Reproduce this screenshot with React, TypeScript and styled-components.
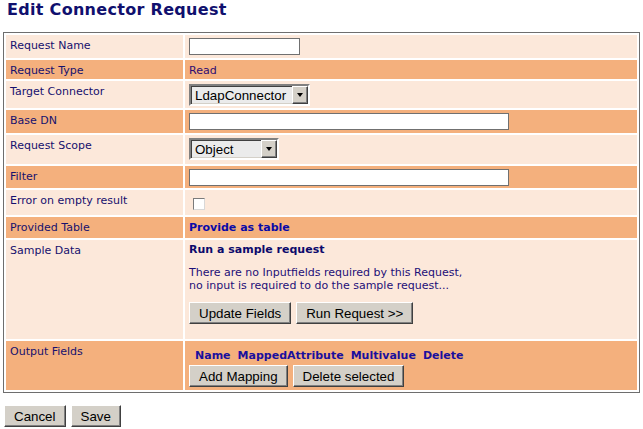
import * as React from 'react';
import styled, { createGlobalStyle } from 'styled-components';

const LIGHT = '#fce8da';
const DARK = '#f4b07d';

type Tone = 'light' | 'dark';

function Dropdown({ width, value }: { width: number; value: string }) {
    return (
        <SelectWrap $w={width}>
            <Select value={value} onChange={() => {}}>
                <option>{value}</option>
            </Select>
            <Arrow />
        </SelectWrap>
    )
}

export default function App() {
    return (
        <>
        <GlobalStyle />
        <Title>Edit Connector Request</Title>
        <FormTable>
            <tbody>
                <Row $tone="light" $h={23}>
                    <Label>Request Name</Label>
                    <Value><TextInput $w={111} /></Value>
                </Row>
                <Row $tone="dark" $h={19}>
                    <Label>Request Type</Label>
                    <Value><ValueText $color="#2e0c72">Read</ValueText></Value>
                </Row>
                <Row $tone="light" $h={27}>
                    <Label>Target Connector</Label>
                    <Value><Dropdown width={121} value="LdapConnector" /></Value>
                </Row>
                <Row $tone="dark" $h={23}>
                    <Label>Base DN</Label>
                    <Value><TextInput $w={320} /></Value>
                </Row>
                <Row $tone="light" $h={29}>
                    <Label>Request Scope</Label>
                    <Value><Dropdown width={90} value="Object" /></Value>
                </Row>
                <Row $tone="dark" $h={22}>
                    <Label>Filter</Label>
                    <Value><TextInput $w={320} /></Value>
                </Row>
                <Row $tone="light" $h={25}>
                    <Label>Error on empty result</Label>
                    <Value><Check type="checkbox" /></Value>
                </Row>
                <Row $tone="dark" $h={21}>
                    <Label>Provided Table</Label>
                    <Value><ValueText $bold $color="#0a0aa8">Provide as table</ValueText></Value>
                </Row>
                <Row $tone="light" $h={99}>
                    <Label>Sample Data</Label>
                    <Value>
                        <SectionHead>Run a sample request</SectionHead>
                        <Note>
                            There are no Inputfields required by this Request,<br />
                            no input is required to do the sample request...
                        </Note>
                        <ButtonRow $top={10}>
                            <Button>Update Fields</Button>
                            <Button>Run Request &gt;&gt;</Button>
                        </ButtonRow>
                    </Value>
                </Row>
                <Row $tone="dark" $h={49}>
                    <Label>Output Fields</Label>
                    <Value>
                        <FieldHeader>
                            <span>Name</span>
                            <span>MappedAttribute</span>
                            <span>Multivalue</span>
                            <span>Delete</span>
                        </FieldHeader>
                        <ButtonRow $top={3}>
                            <Button>Add Mapping</Button>
                            <Button>Delete selected</Button>
                        </ButtonRow>
                    </Value>
                </Row>
            </tbody>
        </FormTable>
        <Footer>
            <Button>Cancel</Button>
            <Button>Save</Button>
        </Footer>
        </>
    )
}

const GlobalStyle = createGlobalStyle`
    * { box-sizing: border-box; }
    body {
        margin: 0;
        background: #fff;
        font-family: "DejaVu Sans", Verdana, sans-serif;
    }
    #root { padding: 0 3px; }
`;

const Title = styled.h1`
    margin: 0;
    padding: 0 0 0 4px;
    height: 32px;
    font-size: 16px;
    line-height: 20px;
    font-weight: bold;
    letter-spacing: 0.3px;
    color: #10106e;
`;

const FormTable = styled.table`
    width: 637px;
    table-layout: fixed;
    border-collapse: separate;
    border-spacing: 2px;
    border: 1px solid #6e6e6e;
    background: #fff;
`;

const Row = styled.tr<{ $tone: Tone; $h: number }>`
    height: ${p => p.$h}px;
    & > td {
        background: ${p => (p.$tone === 'dark' ? DARK : LIGHT)};
    }
`;

const Label = styled.td`
    width: 177px;
    padding: 4px 4px 0;
    vertical-align: top;
    font-size: 11px;
    line-height: 13px;
    color: #16106e;
`;

const Value = styled.td`
    padding: 3px 4px 0;
    vertical-align: top;
    font-size: 11px;
    line-height: 13px;
`;

const ValueText = styled.div<{ $bold?: boolean; $color: string }>`
    padding-top: 1px;
    font-weight: ${p => (p.$bold ? 'bold' : 'normal')};
    color: ${p => p.$color};
`;

const SectionHead = styled.div`
    font-weight: bold;
    color: #0c0a6c;
`;

const Note = styled.div`
    margin-top: 10px;
    color: #1c0f78;
`;

const TextInput = styled.input<{ $w: number }>`
    display: block;
    width: ${p => p.$w}px;
    height: 17px;
    margin: 0;
    padding: 0 2px;
    border: 1px solid #707070;
    background: #fff;
    font: 13px "Liberation Sans", Arial, sans-serif;
`;

const SelectWrap = styled.div<{ $w: number }>`
    position: relative;
    width: ${p => p.$w}px;
    height: 22px;
`;

const Select = styled.select`
    display: block;
    width: 100%;
    height: 100%;
    margin: 0;
    padding: 0 0 0 4px;
    border: 2px solid;
    border-color: #808080 #fff #fff #808080;
    box-shadow: inset 1px 1px #404040, inset -1px -1px #d4d0c8;
    background: #ebebeb;
    color: #000;
    font: 13.33px "Liberation Sans", Arial, sans-serif;
    appearance: none;
    outline: none;
`;

const Arrow = styled.span`
    position: absolute;
    top: 2px;
    right: 2px;
    width: 16px;
    height: 18px;
    background: #d4d0c8;
    border: 1px solid;
    border-color: #fff #404040 #404040 #fff;
    box-shadow: inset -1px -1px #808080;
    pointer-events: none;
    &::after {
        content: '';
        position: absolute;
        left: 4px;
        top: 6px;
        border-left: 3.5px solid transparent;
        border-right: 3.5px solid transparent;
        border-top: 4px solid #000;
    }
`;

const Check = styled.input`
    display: block;
    appearance: none;
    width: 12px;
    height: 12px;
    margin: 5px 0 0 4px;
    border: 1px solid;
    border-color: #7b7b7b #d8d8d8 #d8d8d8 #7b7b7b;
    background: #fff;
`;

const ButtonRow = styled.div<{ $top: number }>`
    display: flex;
    gap: 5px;
    margin-top: ${p => p.$top}px;
`;

const Button = styled.button`
    height: 22px;
    padding: 0 9px;
    border: 1px solid;
    border-color: #fff #404040 #404040 #fff;
    box-shadow: inset -1px -1px #808080;
    background: #d4d0c8;
    color: #000;
    font: 13.33px "Liberation Sans", Arial, sans-serif;
`;

const FieldHeader = styled.div`
    display: flex;
    gap: 7px;
    margin: 5px 0 0 6px;
    font-weight: bold;
    color: #1a0f9e;
`;

const Footer = styled.div`
    display: flex;
    gap: 5px;
    margin-top: 12px;
    padding-left: 1px;
`;
